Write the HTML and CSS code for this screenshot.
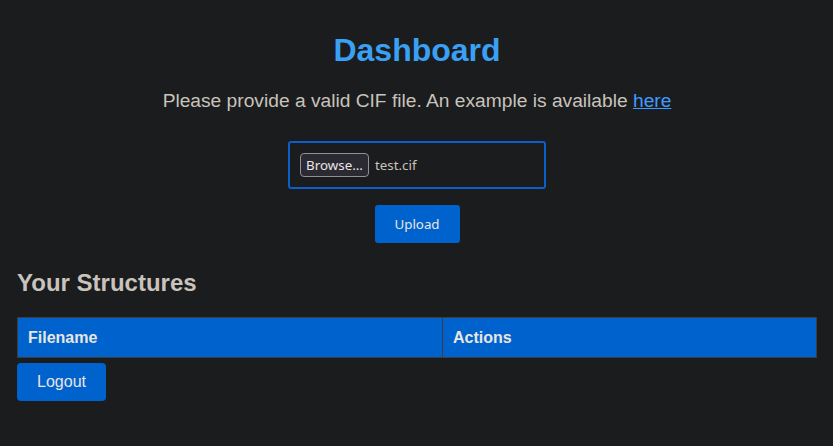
FILE: index.html
```html
<!DOCTYPE html>
<html>
<head>
<meta charset="utf-8">
<link rel="stylesheet" href="styles.css">
</head>
<body>
<main class="page">
  <section class="upload">
    <h1 class="title">Dashboard</h1>
    <p class="intro">Please provide a valid CIF file. An example is available <a href="#" class="link">here</a></p>
    <form class="form">
      <div class="file-box">
        <span class="browse">Browse...</span>
        <span class="file-name">test.cif</span>
      </div>
      <button type="button" class="upload-btn">Upload</button>
    </form>
  </section>
  <h2 class="subtitle">Your Structures</h2>
  <table class="table">
    <thead>
      <tr><th class="col-file">Filename</th><th>Actions</th></tr>
    </thead>
  </table>
  <button type="button" class="logout">Logout</button>
</main>
</body>
</html>
```
FILE: styles.css
```css
html, body {
  margin: 0;
  padding: 0;
  background: #1b1c1e;
}
body {
  font-family: "Liberation Sans", Arial, sans-serif;
  color: #c8c3bc;
}
.page {
  padding: 32px 16px 0 17px;
}
.upload {
  display: flex;
  flex-direction: column;
  align-items: center;
}
.title {
  margin: 0;
  font-size: 32px;
  line-height: 37px;
  font-weight: bold;
  color: #3aa0f3;
}
.intro {
  margin: 21px 0 0;
  font-size: 19.2px;
  line-height: 22px;
  color: #c8c3bc;
}
.link {
  color: #3f9bff;
  text-decoration: underline;
}
.form {
  margin-top: 29px;
  display: flex;
  flex-direction: column;
  align-items: center;
  gap: 16px;
}
.file-box {
  width: 234px;
  height: 24px;
  padding: 10px;
  border: 2px solid #0a5fc9;
  border-radius: 3px;
  display: flex;
  align-items: center;
  gap: 6px;
  font-family: "Noto Sans", sans-serif;
  font-size: 13.33px;
  color: #c8c3bc;
}
.browse {
  box-sizing: border-box;
  height: 24px;
  width: 69px;
  display: flex;
  align-items: center;
  justify-content: center;
  background: #2b2a33;
  border: 1px solid #8f8f9d;
  border-radius: 4px;
  color: #e8e6e3;
}
.file-name {
  color: #c8c3bc;
}
.upload-btn {
  width: 85px;
  height: 38px;
  border: none;
  border-radius: 3px;
  background: #0062cc;
  color: #e8e6e3;
  font-family: "Noto Sans", sans-serif;
  font-size: 13.33px;
  padding: 0;
}
.subtitle {
  margin: 26px 0 0;
  font-size: 24px;
  line-height: 28px;
  font-weight: bold;
  color: #c8c3bc;
}
.table {
  margin-top: 20px;
  width: 100%;
  border-collapse: collapse;
}
.table th {
  height: 39px;
  padding: 0 10px;
  text-align: left;
  background: #0062cc;
  border: 1px solid #3a3e41;
  color: #e8e6e3;
  font-size: 16px;
  font-weight: bold;
}
.table .col-file {
  width: 404px;
}
.logout {
  margin-top: 5px;
  width: 89px;
  height: 38px;
  border: none;
  border-radius: 4px;
  background: #0062cc;
  color: #e8e6e3;
  font-family: "Liberation Sans", Arial, sans-serif;
  font-size: 16px;
  padding: 0;
}
```
